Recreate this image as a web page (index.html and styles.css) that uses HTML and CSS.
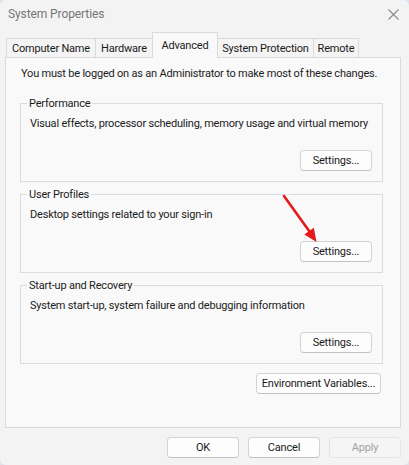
FILE: index.html
```html
<!DOCTYPE html>
<html>
<head>
<meta charset="utf-8">
<title>System Properties</title>
<link rel="stylesheet" href="styles.css">
</head>
<body>
<div class="window">
  <div class="titlebar">
    <span class="title">System Properties</span>
    <svg class="close" width="11" height="11" viewBox="0 0 11 11"><path d="M0.5 0.5 L10.5 10.5 M10.5 0.5 L0.5 10.5" stroke="#8a8a8a" stroke-width="1.1" fill="none"/></svg>
  </div>
  <div class="tabs">
    <div class="tab tab-cn">Computer Name</div>
    <div class="tab tab-hw">Hardware</div>
    <div class="tab tab-adv selected">Advanced</div>
    <div class="tab tab-sp">System Protection</div>
    <div class="tab tab-rm">Remote</div>
  </div>
  <div class="panel">
    <p class="intro">You must be logged on as an Administrator to make most of these changes.</p>
    <fieldset class="group">
      <legend>Performance</legend>
      <p class="desc">Visual effects, processor scheduling, memory usage and virtual memory</p>
      <div class="row"><button class="btn">Settings...</button></div>
    </fieldset>
    <fieldset class="group">
      <legend>User Profiles</legend>
      <p class="desc">Desktop settings related to your sign-in</p>
      <div class="row"><button class="btn">Settings...</button></div>
    </fieldset>
    <fieldset class="group">
      <legend>Start-up and Recovery</legend>
      <p class="desc">System start-up, system failure and debugging information</p>
      <div class="row"><button class="btn">Settings...</button></div>
    </fieldset>
    <div class="row env-row"><button class="btn btn-env">Environment Variables...</button></div>
  </div>
  <div class="footer">
    <button class="btn">OK</button>
    <button class="btn">Cancel</button>
    <button class="btn disabled">Apply</button>
  </div>
  <svg class="arrow" width="409" height="465" viewBox="0 0 409 465">
    <line x1="284" y1="196" x2="309.5" y2="231.5" stroke="#e3191b" stroke-width="2.6" stroke-linecap="round"/>
    <polygon points="316.5,242 304.3,234.6 313.8,227.8" fill="#e3191b"/>
  </svg>
</div>
</body>
</html>
```
FILE: styles.css
```css
* { box-sizing: border-box; }
html, body { margin: 0; padding: 0; }
body {
  background: #dfe4ea;
  font-family: Roboto, "Liberation Sans", sans-serif;
  font-size: 11px;
  letter-spacing: -0.2px;
  color: #1b1b1b;
}
.window {
  position: relative;
  width: 409px;
  height: 465px;
  background: #f3f3f3;
  border-radius: 6px;
  overflow: hidden;
}
.titlebar {
  height: 32px;
  display: flex;
  justify-content: space-between;
  align-items: flex-start;
}
.title {
  padding-left: 8px;
  line-height: 28px;
  font-size: 12px;
  letter-spacing: -0.1px;
  color: #767676;
}
.close { margin: 9px 10px 0 0; }
.tabs {
  display: flex;
  align-items: flex-end;
  height: 25px;
  padding-left: 6px;
}
.tab {
  height: 19px;
  line-height: 19px;
  text-align: center;
  border: 1px solid #dadada;
  border-bottom: none;
  background: #f4f4f4;
  margin-left: -1px;
  white-space: nowrap;
}
.tab-cn { width: 90px; margin-left: 0; }
.tab-hw { width: 58px; }
.tab-adv { width: 66px; }
.tab-sp { width: 97px; }
.tab-rm { width: 46px; }
.tab.selected {
  position: relative;
  z-index: 1;
  height: 26px;
  line-height: 22px;
  padding-top: 2px;
  margin-bottom: -1px;
  background: #f9f9f9;
}
.panel {
  margin: 0 8px 0 5px;
  height: 371px;
  border: 1px solid #dadada;
  background: #f9f9f9;
  padding: 8px 17px 0 14px;
}
.intro {
  margin: 0 0 15px 1px;
  line-height: 15px;
  white-space: nowrap;
}
.group {
  margin: 0 0 5px 0;
  padding: 0 10px 10px 9px;
  border: 1px solid #dcdcdc;
  min-width: 0;
}
.group legend {
  margin-left: -3px;
  padding: 0 2px;
  line-height: 15px;
}
.desc {
  margin: 5px 0 19px 0;
  line-height: 15px;
  white-space: nowrap;
}
.row {
  display: flex;
  justify-content: flex-end;
}
.btn {
  font-family: inherit;
  font-size: 11px;
  letter-spacing: -0.2px;
  color: #1b1b1b;
  height: 21px;
  width: 72px;
  padding: 0;
  background: #fdfdfd;
  border: 1px solid #d3d3d3;
  border-bottom-color: #c2c2c2;
  border-radius: 4px;
}
.env-row {
  margin-top: 9px;
  padding-right: 2px;
}
.btn-env { width: 125px; }
.footer {
  display: flex;
  justify-content: flex-end;
  gap: 9px;
  padding: 9px 8px 0 0;
}
.btn.disabled {
  background: #f5f5f5;
  border-color: #e4e4e4;
  color: #a3a3a3;
}
.arrow {
  position: absolute;
  left: 0;
  top: 0;
  pointer-events: none;
}
```
